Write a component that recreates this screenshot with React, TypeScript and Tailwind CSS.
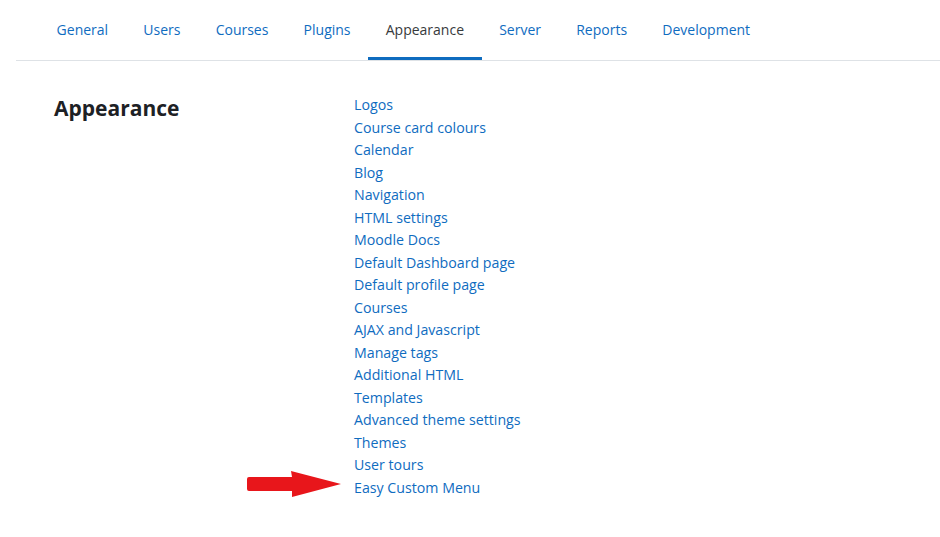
import React from "react";

const tabs = ["General", "Users", "Courses", "Plugins", "Appearance", "Server", "Reports", "Development"];
const links = [
  "Logos",
  "Course card colours",
  "Calendar",
  "Blog",
  "Navigation",
  "HTML settings",
  "Moodle Docs",
  "Default Dashboard page",
  "Default profile page",
  "Courses",
  "AJAX and Javascript",
  "Manage tags",
  "Additional HTML",
  "Templates",
  "Advanced theme settings",
  "Themes",
  "User tours",
  "Easy Custom Menu",
];

export default function App() {
  return (
    <div
      className="w-[940px] h-[537px] bg-white overflow-hidden"
      style={{ fontFamily: '"Open Sans", "Noto Sans", sans-serif' }}
    >
      <div className="ml-4 flex border-b border-[#dee2e6] pl-[23px] h-[61px]">
        {tabs.map((t) => (
          <div
            key={t}
            className={
              "px-[17.6px] flex items-center text-[14px] border-b-[3px] pt-[2px] " +
              (t === "Appearance"
                ? "text-[#373a3c] border-[#0f6cbf]"
                : "text-[#0f6cbf] border-transparent")
            }
          >
            {t}
          </div>
        ))}
      </div>
      <div className="flex pt-[33px]">
        <div className="w-[354px] pl-[54px] shrink-0 relative">
          <h2 className="text-[21px] font-bold text-[#1d2125] leading-[28px]">Appearance</h2>
        </div>
        <div className="flex flex-col relative">
          {links.map((l) => (
            <div key={l} className="text-[14.2px] leading-[22.5px] text-[#0f6cbf]">
              {l}
            </div>
          ))}
          <svg
            className="absolute left-[-108px] bottom-[0px]"
            width="100"
            height="30"
            viewBox="0 0 100 30"
          >
            <path
              d="M3 8 L46 8 L45 2 L95 15 L46 28 L46 22 L3 22 Q1 22 1 20 L1 10 Q1 8 3 8 Z"
              fill="#e8161b"
            />
          </svg>
        </div>
      </div>
    </div>
  );
}
